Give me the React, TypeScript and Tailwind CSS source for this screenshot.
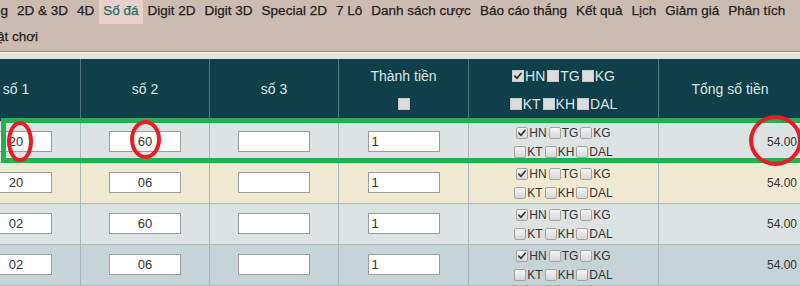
import React from "react";

const navItems = [
  "2D & 3D",
  "4D",
  "Số đá",
  "Digit 2D",
  "Digit 3D",
  "Special 2D",
  "7 Lô",
  "Danh sách cược",
  "Báo cáo thắng",
  "Kết quả",
  "Lịch",
  "Giảm giá",
  "Phân tích",
];

function Check({ dark }: { dark?: boolean }) {
  return (
    <svg viewBox="0 0 12 12" className="h-[10px] w-[10px]">
      <path
        d="M2.2 6.2 L4.8 8.8 L9.8 2.8"
        fill="none"
        stroke={dark ? "#2b2b2b" : "#333"}
        strokeWidth="2"
        strokeLinecap="round"
        strokeLinejoin="round"
      />
    </svg>
  );
}

function BodyBox({ checked }: { checked?: boolean }) {
  return (
    <span className="inline-flex h-[12px] w-[12px] items-center justify-center rounded-[2px] border border-[#a3a3a3] bg-gradient-to-b from-[#f5f5f5] to-[#d6d6d6]">
      {checked && <Check />}
    </span>
  );
}

function HeadBox({ checked }: { checked?: boolean }) {
  return (
    <span className="inline-flex h-[12px] w-[12px] items-center justify-center border border-[#c9c9c9] bg-[#dcdcdc]">
      {checked && <Check dark />}
    </span>
  );
}

function Opt({ label, checked, head }: { label: string; checked?: boolean; head?: boolean }) {
  return (
    <span className="inline-flex items-center">
      {head ? <HeadBox checked={checked} /> : <BodyBox checked={checked} />}
      <span className="ml-[1px]">{label}</span>
    </span>
  );
}

function NumInput({ value, left }: { value: string; left?: boolean }) {
  return (
    <div className="flex items-center justify-center">
      <input
        readOnly
        value={value}
        className={`h-[21px] w-[72px] border border-[#9c9c9c] bg-white text-[13px] text-[#333] outline-none ${
          left ? "pl-[3px] text-left" : "text-center"
        }`}
      />
    </div>
  );
}

const rows = [
  { a: "20", b: "60", bg: "bg-[#dce3e2]" },
  { a: "20", b: "06", bg: "bg-[#f1ead2]" },
  { a: "02", b: "60", bg: "bg-[#dce3e2]" },
  { a: "02", b: "06", bg: "bg-[#c6d4d7]" },
];

export default function App() {
  return (
    <div className="relative h-[286px] w-[800px] overflow-hidden bg-white font-['Liberation_Sans',Arial,sans-serif]">
      {/* Nav */}
      <div className="h-[52px] border-b border-[#a08b70] bg-[#ccbbb1] text-[13.5px] text-[#1e1e1e] [-webkit-text-stroke:0.25px_#1e1e1e]">
        <div className="flex h-[24px] whitespace-nowrap">
          <span className="flex h-[24px] w-[12.5px] justify-end overflow-hidden pr-[4.5px] leading-[21px]">
            Cược thường
          </span>
          {navItems.map((t) =>
            t === "Số đá" ? (
              <span
                key={t}
                className="h-[24px] bg-[#e8d1c8] px-[4.5px] leading-[21px] text-[#1a6c6c] [-webkit-text-stroke:0.25px_#1a6c6c]"
              >
                {t}
              </span>
            ) : (
              <span key={t} className="h-[24px] px-[4.5px] leading-[21px]">
                {t}
              </span>
            )
          )}
        </div>
        <div className="mt-[2px] flex h-[24px] whitespace-nowrap">
          <span className="flex h-[24px] w-[42.5px] justify-end overflow-hidden pr-[4.5px] leading-[21px]">
            Luật chơi
          </span>
        </div>
      </div>
      <div className="h-[7px] border-t border-[#f4f4f4] bg-[#e3e4e2]" />

      {/* Table */}
      <table className="-ml-[49px] w-[850px] table-fixed border-collapse">
        <colgroup>
          <col className="w-[129px]" />
          <col className="w-[129px]" />
          <col className="w-[129px]" />
          <col className="w-[130px]" />
          <col className="w-[190px]" />
          <col className="w-[143px]" />
        </colgroup>
        <thead>
          <tr className="h-[62px] bg-[#0f3f48] text-[14px] font-normal text-[#dce6e6]">
            <th className="border-x border-[#4f777c] p-0 text-center font-normal">số 1</th>
            <th className="border-x border-[#4f777c] p-0 text-center font-normal">số 2</th>
            <th className="border-x border-[#4f777c] p-0 text-center font-normal">số 3</th>
            <th className="border-x border-[#4f777c] p-0 text-center font-normal leading-[28px]">
              <div>Thành tiền</div>
              <div className="flex h-[28px] items-center justify-center">
                <HeadBox />
              </div>
            </th>
            <th className="border-x border-[#4f777c] p-0 text-center font-normal leading-[28px]">
              <div className="flex justify-center gap-[2px]">
                <Opt head checked label="HN" />
                <Opt head label="TG" />
                <Opt head label="KG" />
              </div>
              <div className="flex justify-center gap-[2px]">
                <Opt head label="KT" />
                <Opt head label="KH" />
                <Opt head label="DAL" />
              </div>
            </th>
            <th className="border-x border-[#4f777c] p-0 text-center font-normal">Tổng số tiền</th>
          </tr>
        </thead>
        <tbody>
          {rows.map((r, i) => (
            <tr key={i} className={`h-[41px] ${r.bg}`}>
              <td className="border border-[#a7b6b9] p-0">
                <NumInput value={r.a} />
              </td>
              <td className="border border-[#a7b6b9] p-0">
                <NumInput value={r.b} />
              </td>
              <td className="border border-[#a7b6b9] p-0">
                <NumInput value="" />
              </td>
              <td className="border border-[#a7b6b9] p-0">
                <NumInput value="1" left />
              </td>
              <td className="border border-[#a7b6b9] p-0 pt-[2px] text-[12px] leading-[19px] text-[#333]">
                <div className="flex justify-center gap-[2px]">
                  <Opt checked label="HN" />
                  <Opt label="TG" />
                  <Opt label="KG" />
                </div>
                <div className="flex justify-center gap-[2px]">
                  <Opt label="KT" />
                  <Opt label="KH" />
                  <Opt label="DAL" />
                </div>
              </td>
              <td className="border border-[#a7b6b9] p-0 pr-[4px] text-right text-[12px] text-[#333]">
                54.00
              </td>
            </tr>
          ))}
        </tbody>
      </table>

      {/* Annotations */}
      <div className="pointer-events-none absolute left-[1px] top-[118px] h-[45px] w-[805px] border-[5px] border-[#22b24c]" />
      <div className="pointer-events-none absolute left-[7px] top-[121px] h-[41px] w-[26px] rounded-[50%] border-[4px] border-[#e81c24]" />
      <div className="pointer-events-none absolute left-[130px] top-[120px] h-[39px] w-[31px] rounded-[50%] border-[4px] border-[#e81c24]" />
      <div className="pointer-events-none absolute left-[749px] top-[115px] h-[51px] w-[53px] rounded-[50%] border-[4px] border-[#e81c24]" />
    </div>
  );
}
